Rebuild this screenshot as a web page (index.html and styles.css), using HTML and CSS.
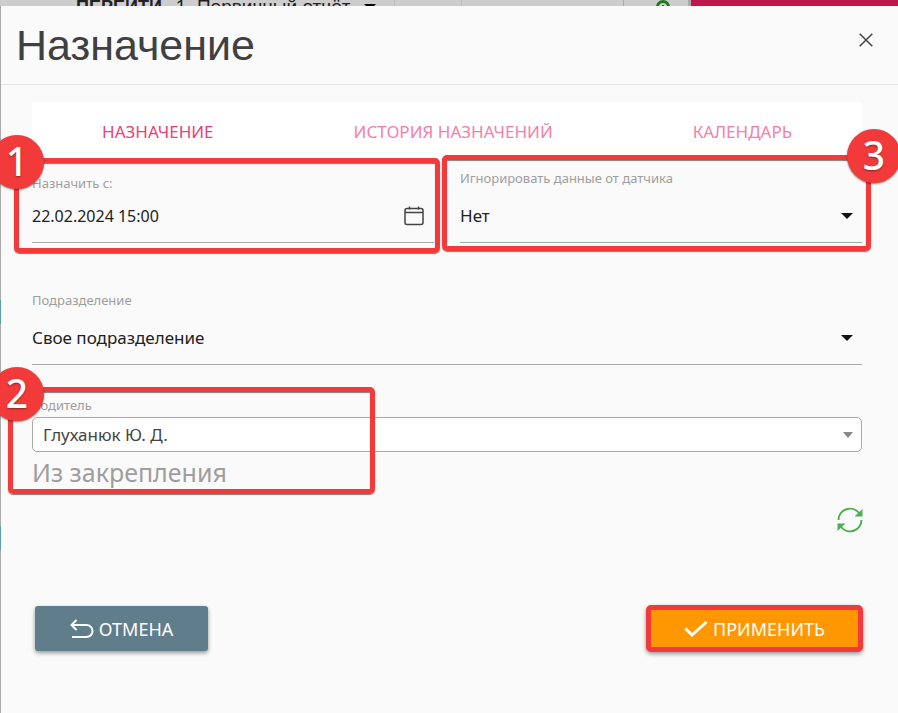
FILE: index.html
```html
<!DOCTYPE html>
<html lang="ru">
<head>
<meta charset="utf-8">
<meta name="viewport" content="width=device-width, initial-scale=1">
<title>Назначение</title>
<link rel="stylesheet" href="styles.css">
</head>
<body>
<div class="toolbar">
  <div class="toolbar-main"><b>ПЕРЕЙТИ</b><span>1. Первичный отчёт</span>
    <svg class="toolbar-caret" width="12" height="8" viewBox="0 0 12 8"><path d="M0 0h12L6 6z"/></svg>
  </div>
  <div class="toolbar-cell"></div>
  <div class="toolbar-fill"></div>
  <div class="toolbar-add">
    <svg width="14" height="14" viewBox="0 0 14 14" fill="none" stroke="#1e7a1e" stroke-width="3"><circle cx="7" cy="7" r="5.5"/><path d="M7 5v4M5 7h4" stroke-width="2"/></svg>
  </div>
  <div class="toolbar-accent"></div>
</div>

<main class="dialog" role="dialog" aria-labelledby="title">
  <header class="dialog-header">
    <h1 id="title">Назначение</h1>
    <button class="close" type="button" aria-label="Закрыть">
      <svg width="14" height="14" viewBox="0 0 14 14" fill="none" stroke="#444" stroke-width="1.5"><path d="M.7.7l12.6 12.6M13.3.7L.7 13.3"/></svg>
    </button>
  </header>

  <form class="dialog-body">
    <nav class="tabs">
      <a class="tab active" href="#assign">НАЗНАЧЕНИЕ</a>
      <a class="tab" href="#history">ИСТОРИЯ НАЗНАЧЕНИЙ</a>
      <a class="tab" href="#calendar">КАЛЕНДАРЬ</a>
    </nav>

    <div class="row">
      <div class="field field-date">
        <label for="from">Назначить с:</label>
        <div class="control">
          <input id="from" type="text" value="22.02.2024 15:00">
          <button class="calendar" type="button" aria-label="Выбрать дату">
            <svg width="20" height="20" viewBox="0 0 20 20" fill="none" stroke="#444" stroke-width="1.5"><rect x="1" y="2.5" width="18" height="16" rx="2"/><path d="M1 6.5h18M5.5.5v3M14.5.5v3"/></svg>
          </button>
        </div>
        <div class="mark mark-date"><span class="badge">1</span></div>
      </div>
      <div class="field">
        <label for="ignore">Игнорировать данные от датчика</label>
        <div class="control">
          <select id="ignore"><option>Нет</option></select>
          <svg class="caret" width="12" height="6" viewBox="0 0 12 6"><path d="M0 0h12L6 6z"/></svg>
        </div>
        <div class="mark mark-sensor"><span class="badge">3</span></div>
      </div>
    </div>

    <div class="field field-unit">
      <label for="unit">Подразделение</label>
      <div class="control">
        <select id="unit"><option>Свое подразделение</option></select>
        <svg class="caret" width="12" height="6" viewBox="0 0 12 6"><path d="M0 0h12L6 6z"/></svg>
      </div>
    </div>

    <div class="field field-driver">
      <label for="driver">Водитель</label>
      <div class="control boxed">
        <select id="driver"><option>Глуханюк Ю. Д.</option></select>
        <svg class="caret" width="10" height="6" viewBox="0 0 10 6"><path d="M0 0h10L5 6z"/></svg>
      </div>
      <p class="hint">Из закрепления</p>
      <div class="mark mark-driver"><span class="badge">2</span></div>
    </div>

    <button class="refresh" type="button" aria-label="Обновить">
      <svg width="26" height="26" viewBox="0 0 26 26"><g fill="none" stroke="#4caf50" stroke-width="2"><path d="M1.5 13A11.5 11.5 0 0 1 22 6"/><path d="M24.500 13A11.500 11.500 0 0 1 4 20"/></g><path fill="#4caf50" d="M25.500 2v7.500h-8zM.5 24v-7.500h8z"/></svg>
    </button>

    <footer class="actions">
      <button class="btn cancel" type="button">
        <svg width="24" height="20" viewBox="0 0 24 20" fill="none" stroke="#fff" stroke-width="2"><path d="M6.500 1L1.500 6l5 5M1.500 6H16.500a6 6 0 0 1 0 12H2"/></svg>
        ОТМЕНА
      </button>
      <button class="btn apply" type="submit">
        <svg width="24" height="18" viewBox="0 0 24 18" fill="none" stroke="#fff" stroke-width="3"><path d="M1.500 8.500L8 15 22.500 2"/></svg>
        ПРИМЕНИТЬ
      </button>
    </footer>
  </form>
</main>
</body>
</html>
```

FILE: styles.css
```css
* { box-sizing: border-box; }

html { overflow: hidden; }

body {
  margin: 0;
  min-height: 100vh;
  display: flex;
  flex-direction: column;
  overflow: hidden;
  background: linear-gradient(#aaa 300px, #55a59c 300px 324px, #aaa 324px 526px, #55a59c 526px 550px, #aaa 550px);
  font: 16px/24px "Noto Sans", "Open Sans", sans-serif;
  color: #212121;
}

button, input, select { font: inherit; color: inherit; }
button { padding: 0; border: 0; background: none; cursor: pointer; }
svg { display: block; flex: none; }

.toolbar {
  display: flex;
  height: 6px;
  overflow: hidden;
  background: #cdcdcd;
  font: 18px/20px "Liberation Sans", sans-serif;
}
.toolbar-main {
  display: flex;
  align-items: flex-start;
  flex: 0 0 395px;
  gap: 14px;
  padding-left: 76px;
  border-right: 1px solid #bbb;
}
.toolbar-main b, .toolbar-main span { margin-top: -3px; }
.toolbar-main span { font-size: 19px; }
.toolbar-caret { margin-top: 4px; }
.toolbar-cell { flex: 0 0 67px; border-right: 1px solid #bbb; }
.toolbar-fill { flex: 1; }
.toolbar-add {
  flex: 0 0 68px;
  padding-left: 32px;
  border-left: 1px solid #aaa;
  border-right: 3px solid #aaa;
}
.toolbar-accent { flex: 0 0 207px; background: #be174e; }

.dialog {
  flex: 1;
  margin-left: 1px;
  background: #fafafa;
}
.dialog-header {
  display: flex;
  align-items: center;
  justify-content: space-between;
  height: 79px;
  padding: 0 25px 0 15px;
  border-bottom: 1px solid #e6e6e6;
}
.close { margin-bottom: 10px; }
h1 {
  margin: 0;
  font: 43px/56px "Liberation Sans", sans-serif;
  color: #404040;
}
.dialog-body { padding: 17px 36px 24px 31px; }

.tabs { display: flex; background: #fff; }
.tab {
  flex: 1 1 auto;
  padding: 18px 0 14px;
  text-align: center;
  text-decoration: none;
  font-size: 17px;
  color: #f480aa;
}
.tab.active { color: #ec407a; }

.row {
  display: grid;
  grid-template-columns: 1fr 1fr;
  gap: 26px;
  align-items: end;
  margin-top: 10px;
}
.field {
  position: relative;
  display: flex;
  flex-direction: column;
  gap: 10px;
}
.field-date { gap: 5px; }
.field label {
  font-size: 13px;
  line-height: 20px;
  color: #9e9e9e;
}
.control {
  display: flex;
  align-items: center;
  height: 45px;
  padding-bottom: 8px;
  border-bottom: 1px solid #a9a9a9;
}
.control input, .control select {
  flex: 1;
  min-width: 0;
  padding: 0;
  border: 0;
  outline: 0;
  background: none;
  appearance: none;
}
.control select { font-size: 17px; }
.caret { margin-right: 9px; pointer-events: none; fill: #111; }
.calendar { margin-right: 10px; }

.field-unit { margin-top: 47px; }
.field-driver { margin-top: 30px; gap: 2px; }
.boxed {
  height: 35px;
  padding: 0 0 0 10px;
  border: 1px solid #aaa;
  border-radius: 5px;
  background: #fff;
}
.boxed select { color: #444; }
.boxed .caret { margin-right: 8px; fill: #888; }
.hint {
  margin: 0;
  font-size: 25px;
  line-height: 36px;
  color: #9e9e9e;
}

.refresh { display: block; margin: 17px -1px 0 auto; }

.actions {
  display: flex;
  align-items: center;
  justify-content: space-between;
  margin: 72px -1px 0 3px;
}
.btn {
  display: flex;
  align-items: center;
  justify-content: center;
  gap: 5px;
  height: 45px;
  border-radius: 3px;
  color: #fff;
  font-size: 18px;
  box-shadow: 0 2px 4px rgba(0, 0, 0, .4);
}
.cancel { width: 173px; background: #607d8b; }
.apply {
  width: 217px;
  height: 47px;
  border: 5px solid #f23a3a;
  border-radius: 5px;
  background: #ff9800;
}

/* Numbered callouts laid over the fields */
.mark {
  position: absolute;
  z-index: 1;
  border: 5px solid #f23a3a;
  border-radius: 5px;
  box-shadow: 0 1px 1px rgba(0, 0, 0, .5), inset 0 1px 1px rgba(0, 0, 0, .5);
  pointer-events: none;
}
.mark-date { inset: -15px -6px -10px -18px; }
.mark-sensor { inset: -13px -9px -8px -18px; }
.mark-driver { inset: -8px auto -4px -24px; width: 367px; }
.badge {
  position: absolute;
  top: -28px;
  left: -29px;
  width: 54px;
  height: 54px;
  border-radius: 50%;
  background: #f23a3a;
  box-shadow: 0 1px 2px rgba(0, 0, 0, .5);
  color: #fff;
  font-size: 39px;
  font-weight: 500;
  line-height: 51px;
  text-align: center;
  text-shadow: 0 1px 2px rgba(0, 0, 0, .4);
}
.mark-driver .badge { top: -25px; left: -23px; }
.mark-sensor .badge { top: -31px; left: auto; right: -35px; }
```
